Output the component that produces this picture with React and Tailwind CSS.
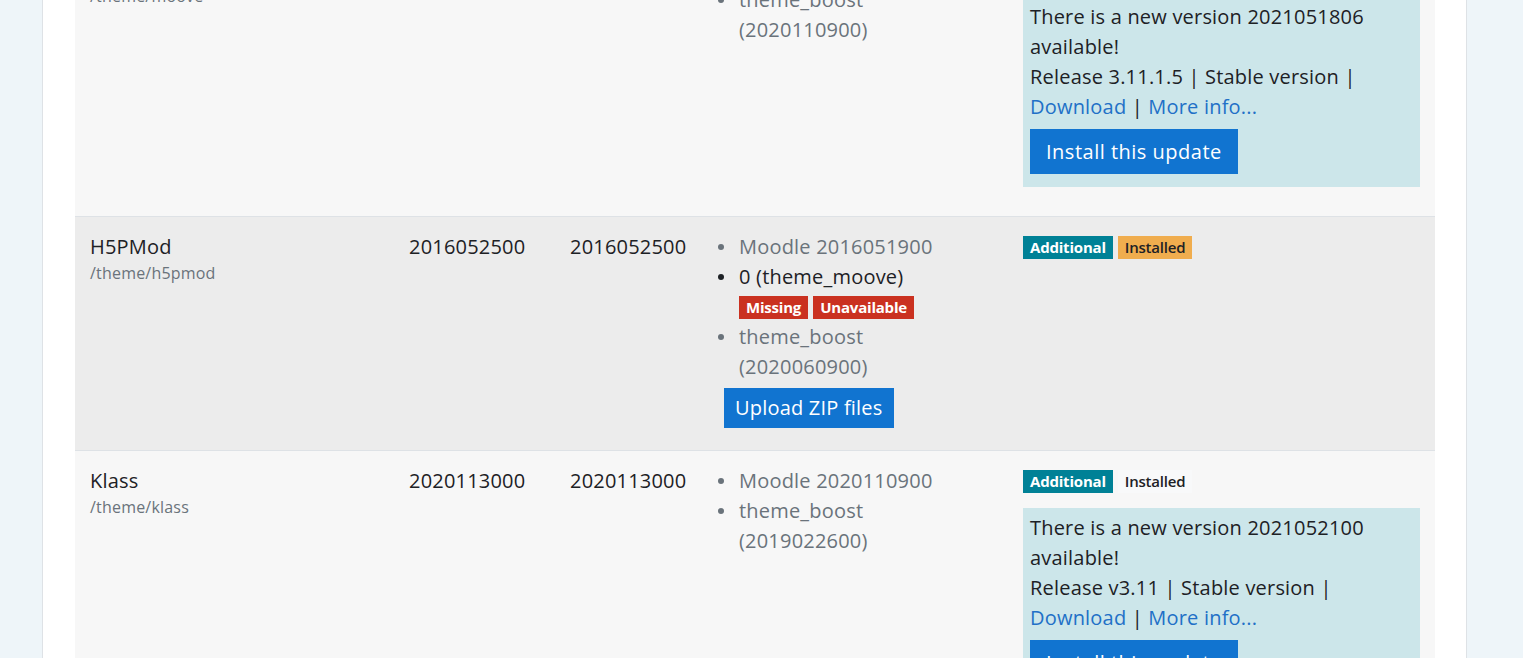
import React from "react";

const font = { fontFamily: '"Open Sans", "Noto Sans", sans-serif' };

const Badge = ({ tone, children }) => {
  const tones = {
    info: "bg-[#008196] text-white font-bold",
    warning: "bg-[#f0ad4e] text-[#1d2125] font-semibold",
    danger: "bg-[#ca3120] text-white font-bold",
    light: "bg-[#f8f9fa] text-[#1d2125] font-semibold",
  };
  return (
    <span
      className={`inline-flex items-center h-[23px] px-[7px] text-[15px] leading-none tracking-[-0.2px] ${tones[tone]}`}
    >
      {children}
    </span>
  );
};

const Bullet = ({ dark, children }) => (
  <div className="flex">
    <div className="w-[22px] shrink-0 h-[30px] flex items-center">
      <span className={`ml-[1px] w-[6px] h-[6px] rounded-full ${dark ? "bg-[#1d2125]" : "bg-[#6a737b]"}`} />
    </div>
    <div className={dark ? "text-[#1d2125]" : "text-[#6a737b]"}>{children}</div>
  </div>
);

const UpdateBox = ({ version, release }) => (
  <div className="mt-[12px] mb-[14px] bg-[#cce6ea] pt-[5px] pb-[13px] px-[7px] text-[#1d2125]">
    <div>There is a new version {version}</div>
    <div>available!</div>
    <div>Release {release} | Stable version |</div>
    <div>
      <a className="text-[#2170c7]">Download</a> | <a className="text-[#2170c7]">More info...</a>
    </div>
    <button className="mt-[7px] h-[45px] px-[16px] bg-[#1174d0] text-white text-[20px] tracking-[0.5px]">
      Install this update
    </button>
  </div>
);

const Row = ({ bg, border, name, path, v1, v2, deps, status }) => (
  <div className={`grid grid-cols-[319px_161px_150px_303px_427px] ${bg} ${border ? "border-t border-[#dee2e6]" : ""}`}>
    <div className="pl-[15px] pt-[15px] pb-[15px]">
      <div className="text-[#1d2125]">{name}</div>
      <div className="text-[16px] leading-[22px] text-[#6a737b]">{path}</div>
    </div>
    <div className="pl-[15px] pt-[15px] text-[#1d2125]">{v1}</div>
    <div className="pl-[15px] pt-[15px] text-[#1d2125]">{v2}</div>
    <div className="pl-[12px] pt-[15px] pb-[15px]">{deps}</div>
    <div className="pl-[15px] pr-[15px] pt-[15px] pb-[15px]">{status}</div>
  </div>
);

export default function App() {
  return (
    <div className="h-[658px] overflow-hidden bg-[#eef5f9] text-[20px] leading-[30px] tracking-[0.2px]" style={font}>
      <div className="ml-[42px] w-[1425px] h-full flex flex-col overflow-hidden bg-white border-x border-[#dee2e6] pl-[32px]">
        <div className="w-[1360px] -mt-[60px] shrink-0">
          <Row
            bg="bg-[#f7f7f7]"
            name="Moove"
            path="/theme/moove"
            v1="2020112000"
            v2="2020112000"
            deps={
              <>
                <Bullet>Moodle 2020110900</Bullet>
                <Bullet>
                  <div>theme_boost</div>
                  <div>(2020110900)</div>
                </Bullet>
              </>
            }
            status={
              <>
                <div className="flex gap-[5px] items-center h-[30px]">
                  <Badge tone="info">Additional</Badge>
                  <Badge tone="light">Installed</Badge>
                </div>
                <UpdateBox version="2021051806" release="3.11.1.5" />
              </>
            }
          />
          <Row
            bg="bg-[#ececec]"
            border
            name="H5PMod"
            path="/theme/h5pmod"
            v1="2016052500"
            v2="2016052500"
            deps={
              <>
                <Bullet>Moodle 2016051900</Bullet>
                <Bullet dark>
                  <div>0 (theme_moove)</div>
                  <div className="flex gap-[5px] items-center h-[30px]">
                    <Badge tone="danger">Missing</Badge>
                    <Badge tone="danger">Unavailable</Badge>
                  </div>
                </Bullet>
                <Bullet>
                  <div>theme_boost</div>
                  <div>(2020060900)</div>
                </Bullet>
                <button className="ml-[7px] mt-[6px] mb-[7px] h-[40px] px-[11px] bg-[#1174d0] text-white text-[20px]">
                  Upload ZIP files
                </button>
              </>
            }
            status={
              <div className="flex gap-[5px] items-center h-[30px]">
                <Badge tone="info">Additional</Badge>
                <Badge tone="warning">Installed</Badge>
              </div>
            }
          />
          <Row
            bg="bg-[#f7f7f7]"
            border
            name="Klass"
            path="/theme/klass"
            v1="2020113000"
            v2="2020113000"
            deps={
              <>
                <Bullet>Moodle 2020110900</Bullet>
                <Bullet>
                  <div>theme_boost</div>
                  <div>(2019022600)</div>
                </Bullet>
              </>
            }
            status={
              <>
                <div className="flex gap-[5px] items-center h-[30px]">
                  <Badge tone="info">Additional</Badge>
                  <Badge tone="light">Installed</Badge>
                </div>
                <UpdateBox version="2021052100" release="v3.11" />
              </>
            }
          />
        </div>
      </div>
    </div>
  );
}
